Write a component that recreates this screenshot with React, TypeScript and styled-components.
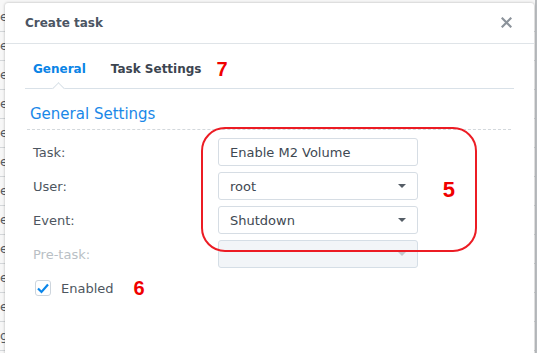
import React from 'react'
import styled, { createGlobalStyle } from 'styled-components'

const GlobalStyle = createGlobalStyle`
  html, body {
    margin: 0;
    padding: 0;
    background: #f4f5f6;
    overflow: hidden;
  }
  body {
    font-family: 'DejaVu Sans', Verdana, sans-serif;
  }
`

const backRows = ['e', 'e', 'e', 'e', 'e', 'e', 'e', 'e', 'e', 'e', 'e', 'g']

const fields = [
  { label: 'Task:', value: 'Enable M2 Volume', select: false, disabled: false },
  { label: 'User:', value: 'root', select: true, disabled: false },
  { label: 'Event:', value: 'Shutdown', select: true, disabled: false },
  { label: 'Pre-task:', value: '', select: true, disabled: true },
]

export default function App(): JSX.Element {
  return (
    <Desktop>
      <GlobalStyle />
      <BackList>
        {backRows.map((t, i) => (
          <BackRow key={i}>{t}</BackRow>
        ))}
      </BackList>
      <ScrollEdge />

      <Dialog>
        <Header>
          <Title>Create task</Title>
          <Close aria-label="close">
            <svg width="11" height="11" viewBox="0 0 11 11">
              <path d="M1.5 1.5 L9.5 9.5 M9.5 1.5 L1.5 9.5" stroke="#8c939b" strokeWidth="2.2" strokeLinecap="square" />
            </svg>
          </Close>
        </Header>

        <Tabs>
          <Tab $active>General</Tab>
          <Tab>Task Settings</Tab>
          <TabMark>7</TabMark>
        </Tabs>

        <Section>
          <SectionTitle>General Settings</SectionTitle>
          <Form>
            {fields.map((f) => (
              <Row key={f.label}>
                <Label $disabled={f.disabled}>{f.label}</Label>
                <Field $disabled={f.disabled}>
                  <span>{f.value}</span>
                  {f.select && <Caret $disabled={f.disabled} />}
                </Field>
              </Row>
            ))}
            <CheckRow>
              <Check>
                <svg width="14" height="12" viewBox="0 0 14 12">
                  <path d="M2 6.5 L5.5 10 L12 2.5" fill="none" stroke="#0a86ea" strokeWidth="2.2" />
                </svg>
              </Check>
              <CheckLabel>Enabled</CheckLabel>
              <Mark $size={20}>6</Mark>
            </CheckRow>
          </Form>
          <Highlight>
            <Mark $size={22}>5</Mark>
          </Highlight>
        </Section>
      </Dialog>
    </Desktop>
  )
}

const Desktop = styled.div`
  position: relative;
  width: 537px;
  height: 353px;
  overflow: hidden;
  background: #f7f7f7;
`

const BackList = styled.div`
  display: flex;
  flex-direction: column;
  padding-top: 3px;
`

const BackRow = styled.div`
  height: 28px;
  border-bottom: 1px solid #d4d7da;
  font-size: 13px;
  line-height: 28px;
  color: #555c64;
`

const ScrollEdge = styled.div`
  position: absolute;
  top: 0;
  right: 0;
  width: 2px;
  height: 100%;
  background: #b9bcbf;
`

const Dialog = styled.div`
  position: absolute;
  left: 5px;
  top: 3px;
  width: 529px;
  height: 370px;
  background: #ffffff;
  border-radius: 3px 3px 0 0;
  box-shadow: 0 0 3px rgba(0, 0, 0, 0.28);
  display: flex;
  flex-direction: column;
`

const Header = styled.div`
  height: 40px;
  display: flex;
  align-items: center;
  justify-content: space-between;
  padding: 0 22px 0 20px;
  border-bottom: 1px solid #dfe4e8;
`

const Title = styled.div`
  font-size: 12px;
  font-weight: bold;
  color: #4b5563;
`

const Close = styled.div`
  display: flex;
  align-items: center;
  margin-top: -1px;
`

const Tabs = styled.div`
  height: 45px;
  margin: 0 20px;
  display: flex;
  align-items: center;
  border-bottom: 1px solid #d9e1e8;
  padding-top: 5px;
  box-sizing: border-box;
`

const Tab = styled.div<{ $active?: boolean }>`
  position: relative;
  height: 100%;
  display: flex;
  align-items: center;
  padding: 0 8px;
  margin-right: 9px;
  font-size: 12px;
  font-weight: bold;
  color: ${(p) => (p.$active ? '#0a84e6' : '#3c4550')};

  &::after {
    content: '';
    display: ${(p) => (p.$active ? 'block' : 'none')};
    position: absolute;
    left: 29px;
    bottom: -5px;
    width: 8px;
    height: 8px;
    background: #ffffff;
    border-left: 1px solid #d9e1e8;
    border-top: 1px solid #d9e1e8;
    transform: rotate(45deg);
  }
`

const Mark = styled.span<{ $size: number }>`
  font-family: 'Liberation Sans', Arial, sans-serif;
  font-weight: bold;
  font-size: ${(p) => p.$size}px;
  color: #f00000;
  line-height: 1;
`

const TabMark = styled.span`
  font-family: 'Liberation Sans', Arial, sans-serif;
  font-weight: bold;
  font-size: 20px;
  color: #f00000;
  line-height: 1;
  margin-left: -2px;
`

const Section = styled.div`
  position: relative;
  padding: 15px 23px 0 22px;
`

const SectionTitle = styled.div`
  font-size: 15px;
  color: #1a88e8;
  padding: 0 0 5px 3px;
  border-bottom: 1px dashed #d3d8dc;
  line-height: 20px;
`

const Form = styled.div`
  display: flex;
  flex-direction: column;
  padding: 8px 0 0 6px;
  gap: 6px;
`

const Row = styled.div`
  display: grid;
  grid-template-columns: 185px 200px;
  align-items: center;
  height: 28px;
`

const Label = styled.div<{ $disabled?: boolean }>`
  font-size: 13px;
  color: ${(p) => (p.$disabled ? '#b9bfc5' : '#4d5660')};
`

const Field = styled.div<{ $disabled?: boolean }>`
  height: 28px;
  box-sizing: border-box;
  border: 1px solid ${(p) => (p.$disabled ? '#d5dee6' : '#d6dde4')};
  border-radius: 3px;
  background: ${(p) => (p.$disabled ? '#f2f5f8' : '#ffffff')};
  display: flex;
  align-items: center;
  justify-content: space-between;
  padding: 0 11px 0 11px;
  font-size: 13px;
  color: #3e4852;
`

const Caret = styled.span<{ $disabled?: boolean }>`
  width: 0;
  height: 0;
  border-left: 4.5px solid transparent;
  border-right: 4.5px solid transparent;
  border-top: 4.5px solid ${(p) => (p.$disabled ? '#c3c8cd' : '#555d66')};
`

const CheckRow = styled.div`
  display: flex;
  align-items: center;
  margin-top: 4px;
  padding-left: 2px;
`

const Check = styled.div`
  width: 16px;
  height: 16px;
  box-sizing: border-box;
  border: 1px solid #cdd5dd;
  border-radius: 3px;
  display: flex;
  align-items: center;
  justify-content: center;
  margin-right: 10px;
`

const CheckLabel = styled.span`
  font-size: 13px;
  color: #4d5660;
  margin-right: 20px;
`

const Highlight = styled.div`
  position: absolute;
  left: 196px;
  top: 38px;
  width: 276px;
  height: 125px;
  box-sizing: border-box;
  border: 2px solid #ec1c24;
  border-radius: 24px;
  display: flex;
  align-items: center;
  justify-content: flex-end;
  padding-right: 20px;
`
